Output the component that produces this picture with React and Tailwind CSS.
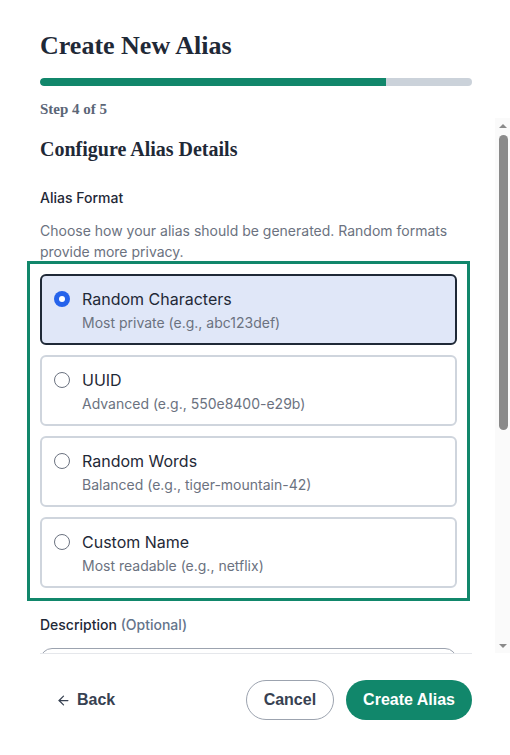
import { useState } from "react";
import { ArrowLeft } from "lucide-react";

const formats = [
  { id: "random", title: "Random Characters", hint: "Most private (e.g., abc123def)" },
  { id: "uuid", title: "UUID", hint: "Advanced (e.g., 550e8400-e29b)" },
  { id: "words", title: "Random Words", hint: "Balanced (e.g., tiger-mountain-42)" },
  { id: "custom", title: "Custom Name", hint: "Most readable (e.g., netflix)" },
];

function Radio({ checked }) {
  if (checked) {
    return (
      <span className="flex h-4 w-4 shrink-0 items-center justify-center rounded-full bg-[#2563eb]">
        <span className="block h-[6px] w-[6px] rounded-full bg-white" />
      </span>
    );
  }
  return <span className="block h-4 w-4 shrink-0 rounded-full border border-[#6b7280] bg-white" />;
}

// Classic scrollbar rail drawn next to the step body
function ScrollRail() {
  return (
    <div className="flex w-[15px] shrink-0 flex-col bg-[#fafafa]">
      <div className="flex h-[15px] items-center justify-center">
        <span className="h-0 w-0 border-x-[4px] border-b-[4px] border-x-transparent border-b-[#8a8a8a]" />
      </div>
      <div className="flex-1">
        <div className="ml-[4px] mt-[2px] h-[295px] w-[9px] rounded-full bg-[#8a8a8a]" />
      </div>
      <div className="flex h-[15px] items-center justify-center">
        <span className="h-0 w-0 border-x-[4px] border-t-[4px] border-x-transparent border-t-[#8a8a8a]" />
      </div>
    </div>
  );
}

export default function App() {
  const [format, setFormat] = useState("random");
  const [description, setDescription] = useState("");

  return (
    <div className="flex h-[755px] flex-col bg-white font-['Inter',sans-serif] text-[#1f2937]">
      {/* Header with progress */}
      <div className="pl-10 pr-[38px] pt-[30px]">
        <h1 className="font-['Liberation_Serif',serif] text-[26px] font-bold leading-8 text-[#1f2937]">
          Create New Alias
        </h1>
        <div className="mt-4 h-2 w-full overflow-hidden rounded-full bg-[#cbd2da]">
          <div className="h-full rounded-l-full bg-[#11876b]" style={{ width: `${(4 / 5) * 100}%` }} />
        </div>
        <p className="mt-[15px] font-['Liberation_Serif',serif] text-[15px] font-bold leading-4 text-[#5b6677]">
          Step 4 of 5
        </p>
      </div>

      {/* Scrollable step body */}
      <div className="mt-[1px] flex min-h-0 flex-1">
        <div className="min-h-0 flex-1 overflow-y-auto pl-10 pr-[38px] pt-[19px] [scrollbar-width:none]">
          <h2 className="font-['Liberation_Serif',serif] text-[20px] font-bold leading-6 text-[#1f2937]">
            Configure Alias Details
          </h2>

          <div className="mt-[27px]">
            <label className="block text-sm font-medium leading-5 text-[#1f2937]">Alias Format</label>
            <p className="mt-[12px] text-sm leading-[21px] text-[#6b7280]">
              Choose how your alias should be generated. Random formats provide more privacy.
            </p>

            <div
              role="radiogroup"
              className="mt-[12px] flex flex-col gap-[10px] outline-[3px] outline-offset-[10px] outline-[#11876b] outline-solid"
            >
              {formats.map((f) => {
                const active = f.id === format;
                return (
                  <button
                    key={f.id}
                    type="button"
                    role="radio"
                    aria-checked={active}
                    onClick={() => setFormat(f.id)}
                    className={
                      active
                        ? "flex items-start gap-3 rounded-md border-2 border-[#1f2937] bg-[#e0e7f8] px-3 pb-[10px] pt-[11px] text-left"
                        : "flex items-start gap-3 rounded-md border-2 border-[#cfd5dd] bg-white px-3 pb-[10px] pt-[11px] text-left"
                    }
                  >
                    <span className="mt-1 flex">
                      <Radio checked={active} />
                    </span>
                    <span className="flex flex-col">
                      <span className="text-base leading-6 text-[#1f2937]">{f.title}</span>
                      <span className="mt-[2px] text-sm leading-5 text-[#6b7280]">{f.hint}</span>
                    </span>
                  </button>
                );
              })}
            </div>
          </div>

          <div className="mt-[27px] pb-[280px]">
            <label htmlFor="description" className="block text-sm font-medium leading-5 text-[#1f2937]">
              Description <span className="text-[#64748b]">(Optional)</span>
            </label>
            <textarea
              id="description"
              rows={4}
              value={description}
              onChange={(e) => setDescription(e.target.value)}
              className="mt-[13px] block w-full resize-none rounded-xl border border-[#9ca3af] px-3 py-2 text-sm"
            />
          </div>
        </div>
        <ScrollRail />
      </div>

      {/* Footer actions */}
      <div className="ml-10 mr-[38px] flex h-[102px] shrink-0 items-start justify-between border-t border-[#e5e7eb] pt-[26px]">
        <button
          type="button"
          className="flex h-10 items-center gap-[6px] px-4 font-['Liberation_Sans',sans-serif] text-base font-bold text-[#374151]"
        >
          <ArrowLeft size={15} strokeWidth={2} />
          <span>Back</span>
        </button>
        <div className="flex gap-3">
          <button
            type="button"
            className="h-10 rounded-full border border-[#9ca3af] bg-white px-[17px] font-['Liberation_Sans',sans-serif] text-base font-bold text-[#374151]"
          >
            Cancel
          </button>
          <button
            type="button"
            className="h-10 rounded-full bg-[#11876b] px-[17px] font-['Liberation_Sans',sans-serif] text-base font-bold text-white"
          >
            Create Alias
          </button>
        </div>
      </div>
    </div>
  );
}
